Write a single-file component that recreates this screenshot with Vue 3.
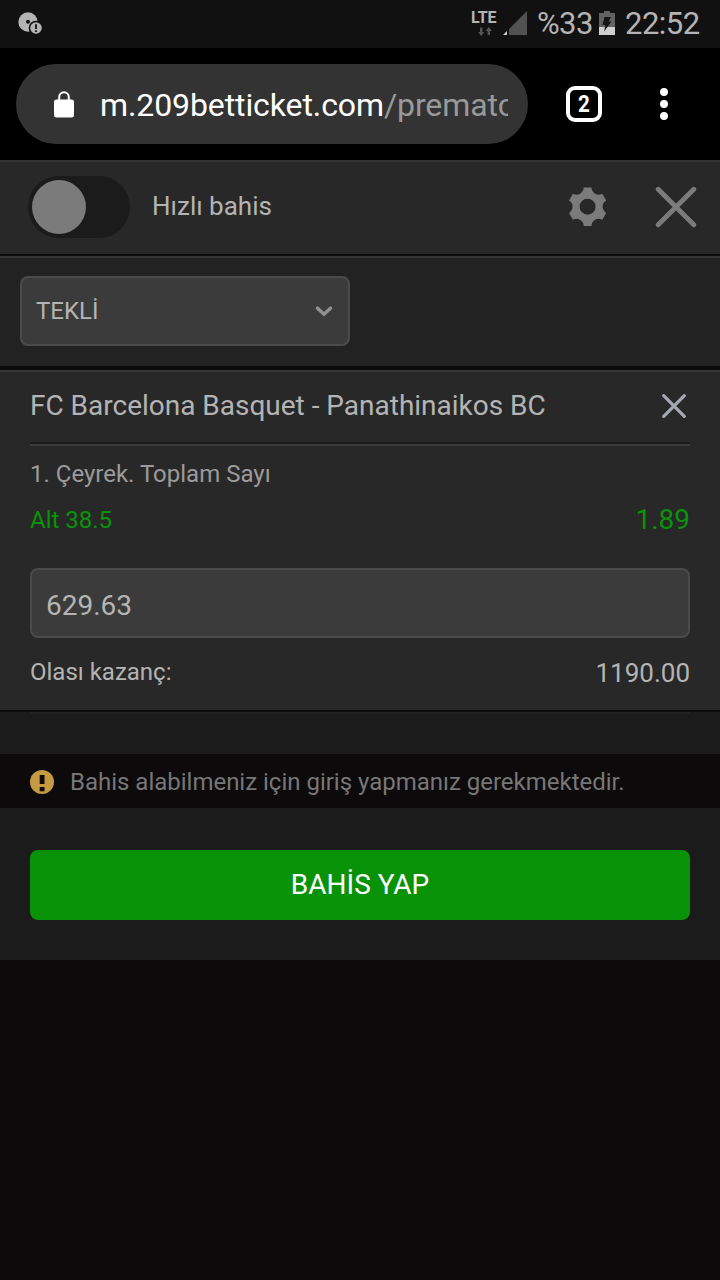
<script setup>
const teeth = [0, 60, 120, 180, 240, 300]
const rad = (d) => (d * Math.PI) / 180
const turn = (x, y, d) => {
  const c = Math.cos(rad(d))
  const s = Math.sin(rad(d))
  return `${(x * c - y * s).toFixed(2)} ${(x * s + y * c).toFixed(2)}`
}
const gearPath =
  teeth
    .map((d, i) => {
      const start = `${i ? 'L' : 'M'}${turn(-3.9, -19.2, d)}`
      return `${start}L${turn(3.9, -19.2, d)}A7.2 7.2 0 0 0 ${turn(-3.9, -19.2, d + 60)}`
    })
    .join('') + 'ZM8 0A8 8 0 1 0 -8 0A8 8 0 1 0 8 0Z'
</script>

<template>
  <div class="screen">
    <div class="status">
      <svg class="disc" width="26" height="24" viewBox="0 0 26 24">
        <circle cx="10" cy="10" r="9.7" fill="#b4b4b4" />
        <circle cx="10" cy="9.7" r="2" fill="#111" />
        <circle cx="18" cy="16" r="7.3" fill="#111" />
        <circle cx="18" cy="16" r="5.8" fill="#b4b4b4" />
        <path d="M18 12.3v4.6M18 18.2v1.8" stroke="#111" stroke-width="1.8" />
      </svg>
      <div class="lte">
        <span>LTE</span>
        <svg width="14" height="9" viewBox="0 0 14 9" fill="#555">
          <path d="M2 0.500h2.400v4.500H6.400L3.200 9L0 5H2zM9.600 8H12V4h2L10.800 0L7.600 4h2z" />
        </svg>
      </div>
      <svg class="signal" width="25" height="25" viewBox="0 0 25 25">
        <path d="M24 0V24H6V18z" fill="#515151" />
        <path d="M4 20V24H0z" fill="#d0d0d0" />
      </svg>
      <span class="percent">%33</span>
      <svg class="battery" width="16" height="24" viewBox="0 0 16 24">
        <path d="M5 0H11V2H16V16H0V2H5z" fill="#626262" />
        <path d="M0 16H16V24H0z" fill="#cfcfcf" />
        <path d="M5.500 6H12L9.700 10.500H12.500L5 20.500L6.500 14H3.500z" fill="#151515" />
      </svg>
      <span class="clock">22:52</span>
    </div>

    <div class="browser">
      <div class="address">
        <svg width="20" height="27" viewBox="0 0 20 27">
          <rect y="8.500" width="20" height="18" rx="2.500" fill="#fff" />
          <path d="M5.200 9V6a4.800 4.800 0 0 1 9.600 0V9" fill="none" stroke="#fff" stroke-width="2" />
        </svg>
        <div class="url">m.209betticket.com<span>/prematc</span></div>
      </div>
      <div class="tabs"><span>2</span></div>
      <div class="dots"><i></i><i></i><i></i></div>
    </div>

    <div class="header">
      <div class="toggle"><div class="knob"></div></div>
      <span class="quick">Hızlı bahis</span>
      <svg class="gear" width="40" height="40" viewBox="-19.6 -19.7 40 40">
        <path :d="gearPath" fill="#7b7b7b" fill-rule="evenodd" />
      </svg>
      <svg class="close" width="42" height="42" viewBox="0 0 42 42">
        <path d="M3.200 3.200L38.800 38.800M38.800 3.200L3.200 38.800" stroke="#7b7b7b" stroke-width="4.800" stroke-linecap="round" />
      </svg>
    </div>

    <div class="mode">
      <div class="select">
        <span>TEKLİ</span>
        <svg width="18" height="12" viewBox="0 0 18 12">
          <path d="M2.500 3.200L9 9.200L15.500 3.200" fill="none" stroke="#909090" stroke-width="3.500" stroke-linecap="round" />
        </svg>
      </div>
    </div>

    <div class="bet">
      <div class="match">
        <span class="teams">FC Barcelona Basquet - Panathinaikos BC</span>
        <svg width="24" height="24" viewBox="0 0 24 24">
          <path d="M1.700 1.700L22.300 22.300M22.300 1.700L1.700 22.300" stroke="#a5a8b1" stroke-width="3.200" stroke-linecap="round" />
        </svg>
      </div>
      <div class="market">1. Çeyrek. Toplam Sayı</div>
      <div class="pick"><span>Alt 38.5</span><span class="odd">1.89</span></div>
      <div class="stake"><span>629.63</span></div>
      <div class="gain"><span>Olası kazanç:</span><span class="sum">1190.00</span></div>
    </div>

    <div class="gap"></div>
    <div class="notice">
      <svg width="24" height="24" viewBox="0 0 24 24">
        <circle cx="12" cy="12" r="12" fill="#c69a40" />
        <path d="M9.700 5h4.800v9H9.700zM9.700 17h4.800v4.300H9.700z" fill="#0c0a0b" />
      </svg>
      <span>Bahis alabilmeniz için giriş yapmanız gerekmektedir.</span>
    </div>
    <div class="action"><div class="submit"><span>BAHİS YAP</span></div></div>
  </div>
</template>

<style>
body { background: #0c0a0b; }
</style>

<style scoped>
.screen { width: 720px; height: 1280px; overflow: hidden; background: #0c0a0b; font-family: Roboto, "Liberation Sans", sans-serif; color: #b4b4b4; white-space: nowrap; }
.screen * { box-sizing: border-box; }
svg { display: block; flex: none; }
.status { height: 48px; background: #111; display: flex; }
.disc { margin: 12px 0 0 18px; }
.lte { width: 26px; margin: 11px 0 0 427px; }
.lte span { display: block; font-size: 16px; line-height: 14px; font-weight: 700; letter-spacing: -0.1px; }
.lte svg { margin: 2px 0 0 7px; }
.signal { margin: 11px 0 0 6px; }
.percent { width: 61px; margin-left: 9px; font-size: 31px; line-height: 48px; letter-spacing: -0.6px; }
.battery { margin: 11px 0 0 1px; }
.clock { margin-left: 10px; font-size: 31px; line-height: 48px; letter-spacing: -0.5px; }
.browser { height: 112px; background: #000; display: flex; align-items: center; padding-left: 16px; }
.address { width: 512px; height: 80px; border-radius: 40px; background: #333; display: flex; align-items: center; padding-left: 38px; }
.url { width: 408px; margin-left: 26px; margin-top: 1px; overflow: hidden; font-size: 32px; line-height: 44px; letter-spacing: -0.1px; color: #fff; }
.url span { color: #999; }
.tabs { width: 36px; height: 36px; margin-left: 38px; border: 4px solid #fff; border-radius: 9px; color: #fff; text-align: center; font-size: 24px; line-height: 28px; font-weight: 700; }
.tabs span { display: inline-block; transform: scaleX(0.86); }
.dots { margin-left: 58px; display: flex; flex-direction: column; gap: 4px; }
.dots i { width: 8px; height: 8px; border-radius: 50%; background: #fff; }
.header { height: 96px; background: #282828; border-top: 2px solid #333; border-bottom: 2px solid #0b0b0b; display: flex; align-items: flex-start; }
.toggle { width: 102px; height: 62px; margin: 14px 0 0 28px; padding: 4px; border-radius: 31px; background: #1b1b1b; }
.knob { width: 54px; height: 54px; border-radius: 50%; background: #7b7b7b; }
.quick { width: 416px; margin-left: 22px; font-size: 26px; line-height: 88px; }
.gear { margin-top: 25px; }
.close { margin: 24px 0 0 47px; }
.mode { height: 114px; background: #222; border-top: 2px solid #333; border-bottom: 4px solid #0b0b0b; padding: 18px 20px; }
.select { width: 330px; height: 70px; border: 2px solid #4b4b4b; border-radius: 8px; background: #3b3b3b; padding: 0 15px 0 14px; display: flex; align-items: center; justify-content: space-between; font-size: 24px; }
.bet { height: 342px; background: #282828; border-top: 2px solid #383838; border-bottom: 2px solid #0b0b0b; padding: 0 30px; }
.match { height: 74px; border-bottom: 2px solid #3b3b3b; box-shadow: inset 0 -2px #1a1a1a; display: flex; justify-content: space-between; padding-right: 4px; }
.match svg { margin-top: 22px; }
.teams { font-size: 28px; line-height: 68px; letter-spacing: -0.01px; }
.market { height: 50px; font-size: 24px; line-height: 56px; color: #9b9b9b; }
.pick { height: 72px; display: flex; justify-content: space-between; color: #089408; font-size: 24px; line-height: 48px; }
.odd { font-size: 28px; line-height: 47px; }
.stake { height: 70px; border: 2px solid #4b4b4b; border-radius: 8px; background: #3b3b3b; padding-left: 14px; font-size: 28px; line-height: 72px; }
.gain { display: flex; justify-content: space-between; font-size: 24px; line-height: 68px; }
.sum { font-size: 26px; line-height: 70px; }
.gap { height: 42px; background: linear-gradient(#222, #222) 30px 0 / 660px 2px no-repeat #1b1b1b; }
.notice { height: 54px; display: flex; align-items: center; gap: 16px; padding: 2px 30px 0; font-size: 24px; letter-spacing: -0.01px; color: #777; }
.action { height: 152px; background: #1b1b1b; padding: 42px 30px 0; }
.submit { height: 70px; border-radius: 8px; background: #089208; color: #fff; text-align: center; font-size: 28px; line-height: 69px; }
</style>
